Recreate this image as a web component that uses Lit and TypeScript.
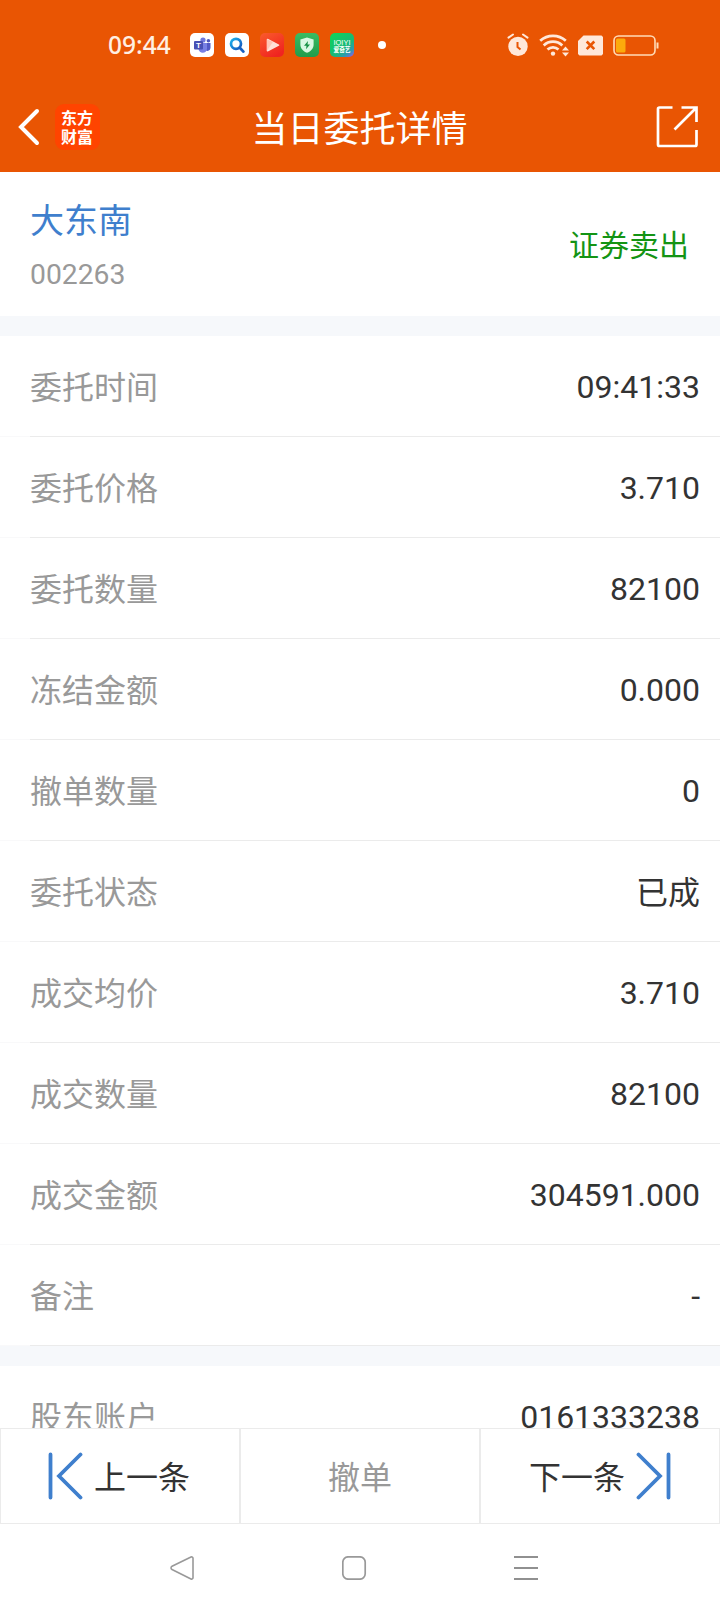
import { LitElement, html, css, svg } from "lit";
import { customElement, property } from "lit/decorators.js";
import { classMap } from "lit/directives/class-map.js";

const CJK = css`Roboto, "Noto Sans CJK SC", sans-serif`;

@customElement("status-bar")
class StatusBar extends LitElement {
  static styles = css`
    :host { display: flex; align-items: center; height: 90px; padding: 0 61px 0 108px; box-sizing: border-box; }
    .time { width: 82px; font: 500 24.5px/30px "Noto Sans", sans-serif; color: #ffefe2; }
    .apps { display: flex; gap: 11px; }
    svg { display: block; flex: none; }
    .dot { width: 8px; height: 8px; border-radius: 50%; background: #fff; margin-left: 24px; }
    .system { display: flex; align-items: center; margin-left: auto; }
    .alarm { margin-right: 10px; }
    .wifi { margin-right: 8px; }
    .sim { margin-right: 10px; }
    .tiny { font: 700 7px "Noto Sans CJK SC", sans-serif; fill: #fff; }
    .latin { font: 400 8px "Liberation Sans", sans-serif; fill: #fff; }
    .tee { font: 700 8px "Liberation Sans", sans-serif; fill: #fff; }
  `;
  render() {
    return html`
      <span class="time">09:44</span>
      <div class="apps">
        <svg width="24" height="24" viewBox="0 0 24 24">
          <rect width="24" height="24" rx="5" fill="#fff" />
          <circle cx="13" cy="7" r="2.6" fill="#7078dc" /><circle cx="18.4" cy="7.8" r="1.8" fill="#5058bd" />
          <path d="M15 10h5.5v5a3 3 0 0 1-5.5 1.5z" fill="#5259c4" />
          <path d="M8.5 10H17v5.5a4.2 4.2 0 0 1-8.500 0z" fill="#7880e4" />
          <rect x="4" y="8" width="9" height="8.5" rx="1" fill="#4850b4" />
          <text class="tee" x="6" y="15">T</text>
        </svg>
        <svg width="24" height="24" viewBox="0 0 24 24">
          <defs><linearGradient id="s" x2="1" y2="1"><stop stop-color="#1cb2ed" /><stop offset="1" stop-color="#1654bd" /></linearGradient></defs>
          <rect width="24" height="24" rx="5" fill="#fff" />
          <circle cx="11" cy="10.8" r="5" fill="none" stroke="url(#s)" stroke-width="2.7" />
          <path d="M14.8 14.8l3.6 3.8" stroke="#1760c2" stroke-width="2.8" stroke-linecap="round" />
        </svg>
        <svg width="24" height="24" viewBox="0 0 24 24">
          <defs><linearGradient id="p" x2=".6" y2="1"><stop stop-color="#fa5c2c" /><stop offset="1" stop-color="#f02420" /></linearGradient></defs>
          <rect width="24" height="24" rx="5" fill="url(#p)" />
          <path d="M7.5 6.5v11.2l11-5.6z" fill="#ffe2d8" stroke="#ffe2d8" stroke-width="1.6" stroke-linejoin="round" />
          <path d="M7 6.5v11.2l6-9z" fill="#ffb4a0" opacity=".6" />
        </svg>
        <svg width="24" height="24" viewBox="0 0 24 24">
          <defs><linearGradient id="g" x2="0" y2="1"><stop stop-color="#3bbc62" /><stop offset="1" stop-color="#219c4b" /></linearGradient></defs>
          <rect width="24" height="24" rx="5" fill="url(#g)" />
          <path d="M12 4.6l6.6 2v5.2c0 3.7-2.7 6.5-6.6 8-3.9-1.5-6.6-4.3-6.6-8V6.6z" fill="#d8f8e2" />
          <path d="M13 8l-4 4.7h2.500L11 16.200l4-4.800h-2.500z" fill="#159044" />
        </svg>
        <svg width="24" height="24" viewBox="0 0 24 24">
          <defs><linearGradient id="q" x1=".2" x2="1" y2="1"><stop stop-color="#0fd25c" /><stop offset=".55" stop-color="#18b877" /><stop offset=".78" stop-color="#2d9ab0" /><stop offset="1" stop-color="#a252ec" /></linearGradient></defs>
          <rect width="24" height="24" rx="5" fill="url(#q)" />
          <text class="latin" x="3.5" y="11.5" textLength="17" lengthAdjust="spacingAndGlyphs">IQIYI</text>
          <text class="tiny" x="3.5" y="19" textLength="17" lengthAdjust="spacingAndGlyphs">爱奇艺</text>
        </svg>
      </div>
      <i class="dot"></i>
      <div class="system">
        <svg class="alarm" width="22" height="24" viewBox="0 0 22 24">
          <circle cx="11" cy="13.4" r="9.7" fill="#ffe8da" />
          <path d="M1.500 4.600L6 1.500M20.500 4.600L16 1.500" stroke="#ffe8da" stroke-width="2" stroke-linecap="round" />
          <path d="M10.500 9v5l3 2.600" fill="none" stroke="#e95503" stroke-width="2" />
        </svg>
        <svg class="wifi" width="31" height="24" viewBox="0 0 31 24">
          <g fill="none" stroke="#ffe8da" stroke-width="2.7">
            <path d="M1.200 7.800a19 19 0 0 1 25.600 0" /><path d="M4.700 12.400a13.500 13.500 0 0 1 18.600 0" /><path d="M8.500 16.600a8 8 0 0 1 11 0" />
          </g>
          <circle cx="14" cy="20.6" r="2.2" fill="#ffe8da" />
          <path d="M23 17.500l3.500-4 3.500 4zM23 19.500l3.500 4 3.500-4z" fill="#ffe8da" />
        </svg>
        <svg class="sim" width="25" height="21" viewBox="0 0 25 21">
          <path d="M5.500.5H23.500L25 2V19l-1.500 1.500h-22L0 19V6z" fill="#ffe8da" />
          <path d="M8.700 6.500l7.600 7.600M16.300 6.500l-7.600 7.600" stroke="#e95503" stroke-width="2.6" />
        </svg>
        <svg width="46" height="21" viewBox="0 0 46 21">
          <rect x="1" y="1" width="41" height="19" rx="4.5" fill="none" stroke="#ffdcb8" stroke-width="1.6" />
          <rect x="3" y="3.5" width="9.5" height="14" rx="1.5" fill="#fcaa0c" />
          <path d="M44.500 7.500v6" stroke="#ffdcb8" stroke-width="2" />
        </svg>
      </div>
    `;
  }
}

@customElement("title-bar")
class TitleBar extends LitElement {
  static styles = css`
    :host { display: grid; grid-template-columns: 1fr auto 1fr; align-items: center; height: 82px; padding: 0 21px 8px 18px; box-sizing: border-box; color: #fff; }
    .left { display: flex; align-items: center; gap: 15px; }
    .title { margin: 6px 0 0 2px; font: 400 36px/48px ${CJK}; }
    .logo { display: flex; flex-direction: column; align-items: center; justify-content: center; width: 45px; height: 46px; border-radius: 9px; background: #ff4400; font: 700 16px/19px "Noto Sans CJK SC", sans-serif; box-sizing: border-box; padding: 0 1px 1px 0; }
    .share { justify-self: end; }
    svg { display: block; }
  `;
  render() {
    return html`
      <div class="left">
        <svg width="22" height="38" viewBox="0 0 22 38"><path d="M19 3L3 19l16 16" fill="none" stroke="#fff" stroke-width="4" stroke-linecap="round" /></svg>
        <div class="logo"><span>东方</span><span>财富</span></div>
      </div>
      <div class="title">当日委托详情</div>
      <svg class="share" width="43" height="44" viewBox="0 0 43 44">
        <path d="M16.500 2.500H3.500A1.500 1.500 0 0 0 2 4V39.500A1.500 1.500 0 0 0 3.500 41H39A1.500 1.500 0 0 0 40.500 39.500V25M25.500 2.500H40.500V17M40.500 2.500L18.500 24.500" fill="none" stroke="#fff" stroke-width="2.7" />
      </svg>
    `;
  }
}

@customElement("detail-row")
class DetailRow extends LitElement {
  @property() label = "";
  @property() value = "";
  static styles = css`
    :host { display: block; height: 101px; padding-left: 30px; box-sizing: border-box; background: #fff; box-shadow: inset 0 -1px #f9f9fa; }
    .row { display: flex; justify-content: space-between; align-items: center; height: 101px; padding: 3px 20px 0 0; box-sizing: border-box; border-bottom: 1px solid #ebebeb; font: 400 32px/46px ${CJK}; }
    .label { color: #999; }
    .value { color: #333; }
    .digits { padding-bottom: 2px; }
  `;
  render() {
    const digits = /^[\d.:-]+$/.test(this.value);
    return html`<div class="row"><span class="label">${this.label}</span><span class=${classMap({ value: true, digits })}>${this.value}</span></div>`;
  }
}

const ROWS = [
  ["委托时间", "09:41:33"],
  ["委托价格", "3.710"],
  ["委托数量", "82100"],
  ["冻结金额", "0.000"],
  ["撤单数量", "0"],
  ["委托状态", "已成"],
  ["成交均价", "3.710"],
  ["成交数量", "82100"],
  ["成交金额", "304591.000"],
  ["备注", "-"],
];

const stepIcon = svg`<path d="M2.500 2.500V45.500M32.500 2.500L11 24l21.500 21.500" fill="none" stroke="#3f7fcd" stroke-width="3.8" stroke-linecap="round" />`;

@customElement("app-root")
class AppRoot extends LitElement {
  static styles = css`
    :host { display: flex; flex-direction: column; width: 720px; height: 1612px; overflow: hidden; background: #fff; font-family: ${CJK}; }
    .top { flex: none; background: #e95503; }
    .scroll { flex: 1; min-height: 0; overflow: hidden; background: #f6f8fb; }
    .summary { display: flex; justify-content: space-between; align-items: center; height: 144px; padding: 3px 31px 0 30px; box-sizing: border-box; background: #fff; }
    .name { font-size: 34px; line-height: 50px; color: #3f7fcd; }
    .code { margin-top: 8px; font-size: 28.3px; line-height: 42px; color: #999; }
    .side { padding-top: 1px; font-size: 30px; line-height: 44px; color: #149414; }
    .group { margin-top: 20px; }
    .actions { flex: none; display: grid; grid-template-columns: repeat(3, 1fr); height: 96px; }
    .action { display: flex; align-items: center; justify-content: center; gap: 11px; border: 1px solid #ebebeb; font-size: 32px; color: #333; }
    .disabled { color: #999; }
    .action span { line-height: 46px; padding-top: 4px; }
    .prev { justify-content: flex-start; padding-left: 47px; }
    .next { justify-content: flex-end; padding-right: 48px; }
    .flip { transform: scaleX(-1); }
    .nav { flex: none; display: flex; justify-content: space-between; height: 88px; padding: 32px 181px 0 169px; box-sizing: border-box; }
    svg { display: block; }
  `;
  render() {
    return html`
      <header class="top"><status-bar></status-bar><title-bar></title-bar></header>
      <main class="scroll">
        <section class="summary">
          <div><div class="name">大东南</div><div class="code">002263</div></div>
          <div class="side">证券卖出</div>
        </section>
        <section class="group">${ROWS.map(([l, v]) => html`<detail-row .label=${l} .value=${v}></detail-row>`)}</section>
        <section class="group"><detail-row .label=${"股东账户"} .value=${"0161333238"}></detail-row></section>
      </main>
      <div class="actions">
        <div class="action prev"><svg width="35" height="48" viewBox="0 0 35 48">${stepIcon}</svg><span>上一条</span></div>
        <div class="action disabled"><span>撤单</span></div>
        <div class="action next"><span>下一条</span><svg class="flip" width="35" height="48" viewBox="0 0 35 48">${stepIcon}</svg></div>
      </div>
      <footer class="nav">
        <svg width="26" height="24" viewBox="0 0 26 24"><path d="M3 10.300L22 1a1.400 1.400 0 0 1 2 1.300V21.700a1.400 1.400 0 0 1-2 1.300L3 13.500a1.800 1.800 0 0 1 0-3.200z" fill="none" stroke="#999" stroke-width="1.6" /></svg>
        <svg width="25" height="24" viewBox="0 0 25 24"><rect x=".8" y=".8" width="22.4" height="22.4" rx="5.5" fill="none" stroke="#999" stroke-width="1.7" /></svg>
        <svg width="25" height="24" viewBox="0 0 25 24"><path d="M0 1h24M0 12h24M0 23h24" stroke="#909090" stroke-width="1.8" /></svg>
      </footer>
    `;
  }
}
